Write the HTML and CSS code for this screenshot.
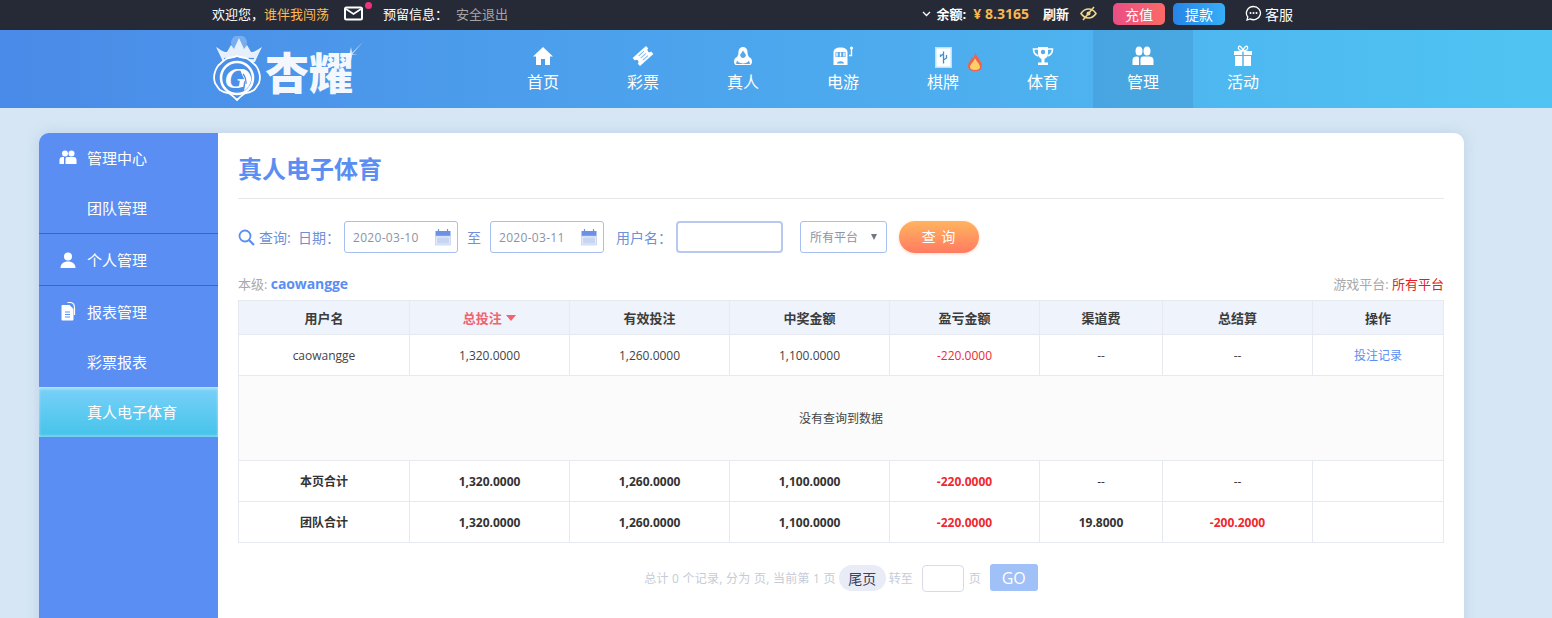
FILE: index.html
```html
<!DOCTYPE html>
<html lang="zh">
<head>
<meta charset="utf-8">
<title>真人电子体育</title>
<link rel="stylesheet" href="styles.css">
</head>
<body>
<header class="topbar">
  <span class="welcome">欢迎您，</span><span class="uname">谁伴我闯荡</span>
  <span class="mail"><svg width="20" height="15" viewBox="0 0 20 15"><rect x="1" y="1.500" width="17" height="12" rx="1.500" fill="none" stroke="#fff" stroke-width="2"/><path d="M2 3l7.500 5L17 3" fill="none" stroke="#fff" stroke-width="1.600"/></svg><i class="dot"></i></span>
  <span class="reserved">预留信息：</span>
  <span class="logout">安全退出</span>
  <div class="top-right">
    <svg class="chev" width="9" height="6" viewBox="0 0 9 6"><path d="M1 1l3.500 3.500L8 1" fill="none" stroke="#fff" stroke-width="1.300"/></svg>
    <b class="bal-label">余额:</b>
    <b class="bal-val">¥ 8.3165</b>
    <b class="refresh">刷新</b>
    <svg class="eye" width="17" height="15" viewBox="0 0 17 15"><path d="M1 7.500C3 4.500 5.500 3 8.500 3s5.500 1.500 7.500 4.500C14 10.500 11.500 12 8.500 12S3 10.500 1 7.500z" fill="none" stroke="#f0d68a" stroke-width="1.600"/><circle cx="8.500" cy="7.500" r="2" fill="#f0d68a"/><path d="M3 14L14 1" stroke="#f0d68a" stroke-width="1.600"/></svg>
    <span class="btn-top pink">充值</span>
    <span class="btn-top blue">提款</span>
    <svg class="chat" width="17" height="17" viewBox="0 0 17 17"><path d="M8.500 1.500a7 6.600 0 1 1-3.400 12.400L2 15l.8-3A7 6.600 0 0 1 8.500 1.500z" fill="none" stroke="#fff" stroke-width="1.300"/><circle cx="5.500" cy="8" r="1" fill="#fff"/><circle cx="8.500" cy="8" r="1" fill="#fff"/><circle cx="11.500" cy="8" r="1" fill="#fff"/></svg>
    <span class="service">客服</span>
  </div>
</header>

<nav class="nav">
  <div class="logo">
    <svg class="emblem" width="52" height="68" viewBox="0 0 52 68">
      <circle cx="27" cy="7" r="8" fill="#fff" opacity=".25"/>
      <path d="M4 11C9 14 11 16 15 16L19 9 22 13 27 2 32 13 35 9 39 16C43 16 45 14 50 11 47 17 45 21 43 26H11C9 21 7 17 4 11z" fill="#e6f0fc"/>
      <path d="M12 22.500h30" stroke="#4a8fe8" stroke-width="1.200"/>
      <path d="M25 20c4 2 8 1 11 3 3 2 4 3 6 5 3 2 4 5 5 8 1 3 1 8 0 11-2 3-3 5-5 7-3 2-5 3-8 3-3 1-6 4-9 7-3-3-6-6-9-7-3 0-5-1-8-3-2-2-3-4-5-7-1-3-1-8 0-11 1-3 2-6 5-8 2-2 3-3 6-5 3-2 7-1 11-3z" fill="#4a8fe8" stroke="#fff" stroke-width="1.800"/>
      <circle cx="25" cy="42" r="16" fill="none" stroke="#fff" stroke-width="2.600"/>
      <text class="emblem-g" x="13" y="52">G</text>
      <path d="M28 33c7-1 12 5 11 12-1 4-3 7-7 10 1-5 2-8 0-12-1-3-3-6-4-10z" fill="#fff"/>
      <path d="M31 38c2 2 3 6 3 10" fill="none" stroke="#4a8fe8" stroke-width="1.200"/>
    </svg>
    <span class="logo-text">杏耀</span>
    <svg class="spark" width="24" height="24" viewBox="0 0 24 24"><path d="M12 5l1.200 5.800L24 0 13.200 12.200 19 12l-5.800 1L12 19l-1.200-6L5 12l5.800-1.200z" fill="#fff" opacity=".75"/></svg>
  </div>
  <a class="nav-item">
    <svg class="nav-ico" width="24" height="24" viewBox="0 0 24 24"><path d="M12 3L2 12.500h3V21h5v-6h4v6h5v-8.500h3z" fill="#fff"/></svg>
    <span>首页</span>
  </a>
  <a class="nav-item">
    <svg class="nav-ico" width="24" height="24" viewBox="0 0 24 24"><g transform="rotate(-42 12 12)"><path d="M3 6.500h18v3.300a2.200 2.200 0 0 0 0 4.400v3.300H3v-3.300a2.200 2.200 0 0 0 0-4.400z" fill="#fff"/><path d="M9 9h7M9 12h7M9 15h7" stroke="#7dbcf0" stroke-width="1"/></g></svg>
    <span>彩票</span>
  </a>
  <a class="nav-item">
    <svg class="nav-ico" width="24" height="24" viewBox="0 0 24 24"><path d="M12 3c3 0 4.500 2.500 4.500 5 0 2 .5 3.500 1.500 5 2 .7 3 2.500 3 4.500 0 1.500-.7 3.500-2 3.500H5c-1.300 0-2-2-2-3.500 0-2 1-3.800 3-4.500 1-1.500 1.500-3 1.500-5 0-2.500 1.500-5 4.500-5z" fill="#fff"/><path d="M12 6.500l3 4.500c-.5 2-1.500 3-3 3s-2.500-1-3-3z" fill="#5aa8ec"/><path d="M6 16.500c1 2 4 3 6 3s5-1 6-3l1 3.500H5z" fill="#5aa8ec"/></svg>
    <span>真人</span>
  </a>
  <a class="nav-item">
    <svg class="nav-ico" width="24" height="24" viewBox="0 0 24 24"><path d="M9.500 3.500c4.500 0 7 1.500 7 5V21h-14V8.500c0-3.500 2.500-5 7-5z" fill="#fff"/><rect x="4.500" y="8" width="10" height="5" fill="#5aa8ec"/><path d="M6 8.500v4M9.500 8.500v4M13 8.500v4" stroke="#fff" stroke-width="1.400"/><path d="M6 19.500c0-3 7-3 7 0z" fill="#5aa8ec"/><path d="M20.500 4.500v7h-2.500" fill="none" stroke="#fff" stroke-width="1.400"/><circle cx="20.500" cy="4" r="1.600" fill="#fff"/></svg>
    <span>电游</span>
  </a>
  <a class="nav-item">
    <span class="ico-wrap">
      <svg class="nav-ico" width="24" height="24" viewBox="0 0 24 24"><rect x="4" y="3" width="17" height="21" fill="#bfe2f8"/><rect x="5.500" y="4.500" width="14" height="18" fill="#fff"/><path d="M12.500 7.500v12M9.500 12l3-2M15.500 11v3l-3 2M9.500 10.500V13" fill="none" stroke="#3a8fd8" stroke-width="1.300"/></svg>
      <svg class="flame" width="16" height="19" viewBox="0 0 16 19"><path d="M8 0c1 4 7 9 7 14 0 3-2 5-7 5s-7-2-7-5c0-4 3-5 4-9l1 2c1-2 2-4 2-7z" fill="#f0624c"/><path d="M8 6c1 3 5 6 5 9 0 2-2 3-5 3s-5-1-5-3c0-3 4-5 5-9z" fill="#fbd06a"/></svg>
    </span>
    <span>棋牌</span>
  </a>
  <a class="nav-item">
    <svg class="nav-ico" width="24" height="24" viewBox="0 0 24 24"><path d="M7 3h10v6.500c0 3-2 5-3.500 5.500v3.500H17V21H7v-2.500h3.500V15C9 14.500 7 12.500 7 9.500z" fill="#fff"/><path d="M7 5H2.500c0 4 1.500 6 5 7M17 5h4.500c0 4-1.500 6-5 7" fill="none" stroke="#fff" stroke-width="1.600"/><circle cx="12" cy="8" r="2.200" fill="#5aa8ec"/></svg>
    <span>体育</span>
  </a>
  <a class="nav-item active">
    <svg class="nav-ico" width="24" height="24" viewBox="0 0 24 24"><ellipse cx="8" cy="7" rx="3.500" ry="4.500" fill="#fff"/><ellipse cx="16" cy="7" rx="3.500" ry="4.500" fill="#fff"/><path d="M1.500 21v-5c0-2.500 2-3.500 4-3.500h1c1.500 0 1.500 1 1.500 2.500v6z" fill="#fff"/><path d="M9.500 21v-6c0-1.500 1-2.500 2.500-2.500h6c2.500 0 4.500 1 4.500 3.500v5z" fill="#fff"/></svg>
    <span>管理</span>
  </a>
  <a class="nav-item">
    <svg class="nav-ico" width="24" height="24" viewBox="0 0 24 24"><path d="M3 7h18v4H3zM4 12h16v10H4z" fill="#fff"/><path d="M12 7v15" stroke="#5ab4ec" stroke-width="1.500"/><path d="M12 7C9 7 6.500 5 7.500 3S11 3 12 7zm0 0c3 0 5.500-2 4.500-4S13 3 12 7z" fill="none" stroke="#fff" stroke-width="1.300"/></svg>
    <span>活动</span>
  </a>
</nav>

<div class="page">
  <aside class="side">
    <div class="group">
      <div class="side-head">
        <svg class="side-ico" width="17" height="15" viewBox="0 0 17 15"><circle cx="5.500" cy="3.500" r="3" fill="#fff"/><circle cx="12" cy="3.500" r="3" fill="#fff"/><path d="M0 14V10c0-2 1-3 3-3h1.500v7zM6 14V9c0-1.500 1-2 2-2h6c2 0 3 1 3 3v4z" fill="#fff"/></svg>
        <span>管理中心</span>
      </div>
      <div class="side-sub">团队管理</div>
    </div>
    <div class="group">
      <div class="side-head">
        <svg class="side-ico" width="17" height="16" viewBox="0 0 17 16"><circle cx="8.500" cy="4.500" r="4" fill="#fff"/><path d="M1 16c0-4 3-6.500 7.500-6.500S16 12 16 16z" fill="#fff"/></svg>
        <span>个人管理</span>
      </div>
    </div>
    <div class="group last">
      <div class="side-head">
        <svg class="side-ico" width="17" height="19" viewBox="0 0 17 19"><path d="M3 3h7l4 4v10c0 1-.5 1.500-1.500 1.500h-9.500C2.500 18.500 2 18 2 17V4c0-.5.5-1 1-1z" fill="#fff"/><path d="M8 .5h2.500c3 0 4.500 2.500 4.500 5.500v7" fill="none" stroke="#fff" stroke-width="1.200"/><path d="M5.500 10h5M5.500 12.500h5M5.500 15h5" stroke="#5b8ef2"/></svg>
        <span>报表管理</span>
      </div>
      <div class="side-sub">彩票报表</div>
      <div class="side-sub current">真人电子体育</div>
    </div>
  </aside>

  <main class="card">
    <h1 class="title">真人电子体育</h1>
    <form class="query">
      <svg class="q-ico" width="17" height="17" viewBox="0 0 17 17"><circle cx="7" cy="7" r="5.500" fill="none" stroke="#5b8ef2" stroke-width="1.800"/><path d="M11 11l5 5" stroke="#5b8ef2" stroke-width="2.200"/></svg>
      <span class="q-label q-search">查询:</span>
      <span class="q-label q-date">日期：</span>
      <div class="date-box">
        <span>2020-03-10</span>
        <svg width="16" height="18" viewBox="0 0 16 18"><rect x="0.500" y="3" width="15" height="5" fill="#6b90e4"/><rect x="0.500" y="8" width="15" height="9" fill="#e4ebfa" stroke="#b5c8ef" stroke-width=".6"/><path d="M3.500 1v4M12.500 1v4" stroke="#6b90e4" stroke-width="1.200"/><path d="M3 9.500v6M5 9.500v6M7 9.500v6M9 9.500v6M11 9.500v6M13 9.500v6" stroke="#9db5ea" stroke-width=".8"/></svg>
      </div>
      <span class="q-label q-to">至</span>
      <div class="date-box">
        <span>2020-03-11</span>
        <svg width="16" height="18" viewBox="0 0 16 18"><rect x="0.500" y="3" width="15" height="5" fill="#6b90e4"/><rect x="0.500" y="8" width="15" height="9" fill="#e4ebfa" stroke="#b5c8ef" stroke-width=".6"/><path d="M3.500 1v4M12.500 1v4" stroke="#6b90e4" stroke-width="1.200"/><path d="M3 9.500v6M5 9.500v6M7 9.500v6M9 9.500v6M11 9.500v6M13 9.500v6" stroke="#9db5ea" stroke-width=".8"/></svg>
      </div>
      <span class="q-label q-user">用户名：</span>
      <input class="user-input" type="text">
      <div class="select-box"><span>所有平台</span><i class="caret"></i></div>
      <button class="search-btn" type="button">查 询</button>
    </form>

    <div class="info-row">
      <span class="info-left">本级: <b>caowangge</b></span>
      <span class="info-right">游戏平台: <em>所有平台</em></span>
    </div>

    <table class="grid">
      <colgroup>
        <col class="c1"><col class="c2"><col class="c3"><col class="c4"><col class="c5"><col class="c6"><col class="c7"><col class="c8">
      </colgroup>
      <thead>
        <tr>
          <th>用户名</th>
          <th class="sorted">总投注 <i class="sort-caret"></i></th>
          <th>有效投注</th>
          <th>中奖金额</th>
          <th>盈亏金额</th>
          <th>渠道费</th>
          <th>总结算</th>
          <th>操作</th>
        </tr>
      </thead>
      <tbody>
        <tr class="row">
          <td>caowangge</td><td>1,320.0000</td><td>1,260.0000</td><td>1,100.0000</td><td class="red">-220.0000</td><td>--</td><td>--</td><td class="link">投注记录</td>
        </tr>
        <tr class="empty"><td colspan="8">没有查询到数据</td></tr>
        <tr class="row sum">
          <td>本页合计</td><td>1,320.0000</td><td>1,260.0000</td><td>1,100.0000</td><td class="red">-220.0000</td><td class="plain">--</td><td class="plain">--</td><td></td>
        </tr>
        <tr class="row sum">
          <td>团队合计</td><td>1,320.0000</td><td>1,260.0000</td><td>1,100.0000</td><td class="red">-220.0000</td><td>19.8000</td><td class="red">-200.2000</td><td></td>
        </tr>
      </tbody>
    </table>

    <div class="pager">
      <span class="pager-text">总计 0 个记录, 分为 页, 当前第 1 页</span>
      <span class="pill">尾页</span>
      <span>转至</span>
      <input class="page-input" type="text">
      <span>页</span>
      <span class="go">GO</span>
    </div>
  </main>
</div>
</body>
</html>
```

FILE: styles.css
```css
* { box-sizing: border-box; }
html, body { margin: 0; height: 618px; overflow: hidden; }
body {
  background: #d6e6f4;
  font-family: "Open Sans", "Noto Sans CJK SC", sans-serif;
  font-size: 12px;
  color: #333;
}

/* top bar */
.topbar {
  height: 30px;
  background: #252a36;
  color: #fff;
  display: flex;
  align-items: center;
  padding: 0 259px 3px 212px;
  font-size: 13px;
}
.uname { color: #ffb84d; }
.mail { position: relative; display: flex; margin-left: 15px; }
.dot { position: absolute; top: -4px; right: -8px; width: 7px; height: 7px; border-radius: 50%; background: #f0327c; }
.reserved { margin-left: 19px; }
.logout { margin-left: 8px; color: #a5a5a5; }
.top-right { margin-left: auto; display: flex; align-items: center; }
.chev { margin-right: 6px; }
.bal-label { font-size: 13px; }
.bal-val { margin-left: 7px; color: #f8b84e; font-size: 14px; }
.refresh { margin-left: 14px; font-size: 13px; }
.eye { margin-left: 11px; }
.btn-top { width: 52px; height: 22px; border-radius: 5px; margin-left: 8px; display: flex; align-items: center; justify-content: center; font-size: 14px; color: #fff; }
.btn-top.pink { margin-left: 16px; background: linear-gradient(90deg, #ea4e84, #fb6a66); }
.btn-top.blue { background: linear-gradient(90deg, #2684e6, #36aef8); }
.chat { margin-left: 20px; }
.service { margin-left: 3px; font-size: 14px; }

/* nav */
.nav {
  height: 78px;
  background: linear-gradient(90deg, #4a8ae8, #4fc4f2);
  display: flex;
  padding-left: 212px;
}
.logo { width: 281px; display: flex; align-items: center; position: relative; }
.emblem { flex: none; margin-top: 1px; }
.emblem-g { fill: #fff; font-family: "Liberation Serif", serif; font-size: 30px; font-weight: 700; font-style: italic; }
.logo-text { color: #f4f8fe; font-size: 44px; font-weight: 900; line-height: 1; margin: 4px 0 0 1px; font-family: "Noto Sans CJK SC", sans-serif; white-space: nowrap; }
.spark { position: absolute; left: 127px; top: 12px; }
.nav-item { width: 100px; display: flex; flex-direction: column; align-items: center; color: #fff; font-size: 16px; padding-top: 14px; }
.nav-item.active { background: rgba(60, 130, 190, .28); }
.nav-ico { display: block; }
.nav-item > span:last-child { margin-top: 4px; line-height: 20px; }
.ico-wrap { position: relative; display: block; height: 24px; }
.flame { position: absolute; left: 36px; top: 8px; }

/* page */
.page {
  display: flex;
  margin: 25px 0 0 39px;
  width: 1425px;
  height: 620px;
  border-radius: 10px 10px 0 0;
  box-shadow: 0 0 14px rgba(120, 150, 190, .25);
}
.side { width: 179px; flex: none; background: #5b8ef2; border-radius: 10px 0 0 0; color: #fff; font-size: 15px; }
.group { border-bottom: 1px solid #3368d4; padding-top: 1px; }
.group:first-child { padding-top: 0; }
.group.last { border-bottom: 0; }
.side-head { height: 50px; display: flex; align-items: center; padding: 0 0 1px 20px; }
.side-ico { width: 18px; margin-right: 10px; flex: none; }
.side-sub { height: 50px; display: flex; align-items: center; padding: 0 0 1px 48px; }
.side-sub.current {
  background: linear-gradient(180deg, #79d1f8, #45c3ea);
  box-shadow: inset 0 2px 3px rgba(255, 255, 255, .45), inset 0 -2px 2px rgba(255,255,255,.25);
}

.card { flex: 1; background: #fff; border-radius: 0 10px 0 0; padding: 0 20px; }
.title { margin: 0; height: 66px; border-bottom: 1px solid #e8e8e8; color: #5b8ef2; font-size: 24px; font-weight: 700; line-height: 70px; font-family: "Noto Sans CJK SC", sans-serif; }

.query { display: flex; align-items: center; height: 32px; margin-top: 22px; font-size: 14px; }
.q-ico { flex: none; margin-right: 4px; }
.q-label { color: #6f8fd6; white-space: nowrap; }
.q-search { width: 32px; }
.q-date { margin: 0 4px 0 7px; width: 42px; }
.q-to { margin: 0 9px; }
.q-user { margin: 0 4px 0 12px; width: 56px; }
.date-box { width: 114px; height: 32px; border: 1px solid #a6bff0; border-radius: 3px; display: flex; align-items: center; justify-content: space-between; padding: 0 6px 0 8px; color: #8b93a6; font-size: 12px; letter-spacing: .3px; }
.user-input { width: 107px; height: 32px; border: 2px solid #b7c9ee; border-radius: 4px; background: #fff; padding: 0 4px; outline: 0; }
.select-box { width: 87px; height: 32px; margin-left: 17px; border: 1px solid #a6bff0; border-radius: 3px; display: flex; align-items: center; justify-content: space-between; padding: 0 9px; color: #8b93a6; font-size: 12px; }
.caret { width: 0; height: 0; border: 3.500px solid transparent; border-top: 6px solid #6f7684; border-bottom: 0; }
.search-btn { width: 80px; height: 32px; margin-left: 12px; border: 0; border-radius: 16px; background: linear-gradient(180deg, #ffb45e, #ff7b62); color: #fff; font: inherit; font-size: 14px; letter-spacing: 1px; box-shadow: 0 1px 3px rgba(255, 140, 90, .35); padding: 0 0 2px; }

.info-row { display: flex; justify-content: space-between; align-items: center; height: 20px; margin-top: 20px; font-size: 13px; color: #a8a8a8; }
.info-left b { color: #5b8ef2; font-weight: 700; font-size: 14px; letter-spacing: -.1px; }
.info-right em { color: #e01c24; font-style: normal; }

.grid { width: 1205px; margin-top: 7px; border-collapse: collapse; table-layout: fixed; }
.c1 { width: 171px; } .c2, .c3, .c4 { width: 160px; } .c5 { width: 150px; } .c6 { width: 123px; } .c7 { width: 150px; } .c8 { width: 131px; }
.grid th, .grid td { border: 1px solid #e6e9f0; text-align: center; padding: 0; }
.grid th { height: 34px; background: #eff3fb; font-size: 13px; font-weight: 700; color: #3c3c3c; }
.grid th.sorted { color: #f0636f; }
.sort-caret { display: inline-block; vertical-align: 2px; width: 0; height: 0; border: 5px solid transparent; border-top: 6px solid #f0636f; border-bottom: 0; margin-left: 1px; }
.row td { height: 41px; color: #444; }
.empty td { height: 85px; background: #fbfbfb; color: #444; }
.sum td { font-weight: 700; color: #333; }
.sum td.plain { font-weight: 400; }
.red, .row td.red { color: #f0282d; }
.row td.link { color: #5b8ef2; }

.pager { display: flex; align-items: center; justify-content: center; margin-top: 21px; height: 28px; color: #c6cbd8; font-size: 12px; }
.pager-text { letter-spacing: .25px; }
.pill { margin: 0 3px; width: 47px; height: 26px; border-radius: 13px; background: #e9ecf6; color: #3a4160; font-size: 14px; display: flex; align-items: center; justify-content: center; }
.page-input { width: 42px; height: 27px; margin: 0 5px 0 9px; border: 1px solid #d8dbe6; border-radius: 4px; background: #fff; outline: 0; }
.go { width: 48px; height: 27px; margin: -1px 0 0 9px; border-radius: 3px; background: #a0c0f8; color: #fff; font-size: 16px; display: flex; align-items: center; justify-content: center; }
```
